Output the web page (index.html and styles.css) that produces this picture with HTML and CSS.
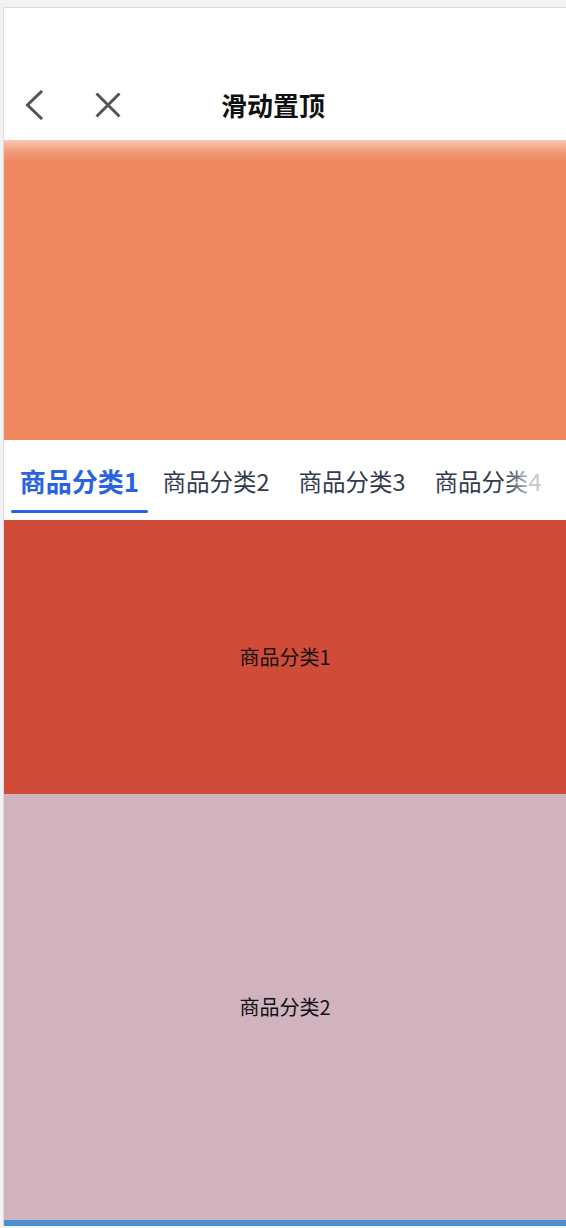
FILE: index.html
```html
<!DOCTYPE html>
<html lang="zh">
<head>
<meta charset="utf-8">
<title>滑动置顶</title>
<link rel="stylesheet" href="styles.css">
</head>
<body>
<div class="frame">
  <header class="header">
    <div class="nav">
      <svg class="icon back" width="30" height="30" viewBox="0 0 30 30" aria-hidden="true">
        <path d="M22 2 L8.5 15 L22 28" fill="none" stroke="#555" stroke-width="3" stroke-linecap="square" stroke-linejoin="miter"/>
      </svg>
      <svg class="icon close" width="30" height="30" viewBox="0 0 30 30" aria-hidden="true">
        <path d="M3.5 3.5 L26.5 26.5 M26.5 3.5 L3.5 26.5" fill="none" stroke="#555" stroke-width="3" stroke-linecap="butt"/>
      </svg>
      <h1 class="title">滑动置顶</h1>
    </div>
  </header>
  <div class="banner"></div>
  <nav class="tabs">
    <div class="tab active"><span class="tab-label">商品分类1</span><span class="tab-line"></span></div>
    <div class="tab"><span class="tab-label">商品分类2</span></div>
    <div class="tab"><span class="tab-label">商品分类3</span></div>
    <div class="tab"><span class="tab-label">商品分类4</span></div>
  </nav>
  <section class="panel panel-1">商品分类1</section>
  <section class="panel panel-2">商品分类2</section>
  <section class="panel panel-3"></section>
</div>
</body>
</html>
```

FILE: styles.css
```css
html, body {
  margin: 0;
  padding: 0;
}
body {
  background: #f2f2f2;
  font-family: "Noto Sans CJK SC", "Noto Sans", sans-serif;
  overflow: hidden;
}
.frame {
  margin: 7px 0 0 3px;
  border-top: 1px solid #dadada;
  border-left: 1px solid #dadada;
  background: #fff;
}
.header {
  height: 132px;
  padding-top: 65px;
  box-sizing: border-box;
  background: #fff;
}
.nav {
  height: 64px;
  display: flex;
  align-items: center;
}
.icon {
  display: block;
  flex: none;
}
.back {
  margin-left: 15px;
}
.close {
  margin-left: 44px;
}
.title {
  margin: 0 0 0 98px;
  font-size: 26px;
  font-weight: 700;
  line-height: 32px;
  color: #111;
  letter-spacing: 0;
}
.banner {
  height: 300px;
  background:
    linear-gradient(to bottom, rgba(255, 255, 255, 0.55) 0px, rgba(255, 255, 255, 0.2) 10px, rgba(255, 255, 255, 0) 22px),
    #f0875e;
}
.tabs {
  position: relative;
  height: 80px;
  display: flex;
  padding-left: 7px;
  background: #fff;
  overflow: hidden;
  white-space: nowrap;
}
.tabs::after {
  content: "";
  position: absolute;
  top: 0;
  right: 0;
  width: 60px;
  height: 100%;
  background: linear-gradient(to right, rgba(255, 255, 255, 0), rgba(255, 255, 255, 0.72) 25px, rgba(255, 255, 255, 0.72));
  pointer-events: none;
}
.tab {
  flex: none;
  width: 137px;
  display: flex;
  flex-direction: column;
  align-items: center;
  padding-top: 25px;
  box-sizing: border-box;
}
.tab-label {
  font-size: 23.5px;
  line-height: 32px;
  color: #343b50;
}
.tab.active .tab-label {
  font-size: 26px;
  font-weight: 700;
  color: #2a63e0;
}
.tab-line {
  display: block;
  margin-top: 13px;
  width: 137px;
  height: 3px;
  border-radius: 2px;
  background: #2a63e0;
}
.tab + .tab {
  width: 136px;
}
.panel {
  display: flex;
  align-items: center;
  justify-content: center;
  font-size: 20px;
  line-height: 28px;
  color: #111;
}
.panel-1 {
  height: 274px;
  background: #d04c39;
}
.panel-2 {
  height: 426px;
  background: #d0b3bf;
}
.panel-3 {
  height: 6px;
  background: #4a8ed4;
}
```
